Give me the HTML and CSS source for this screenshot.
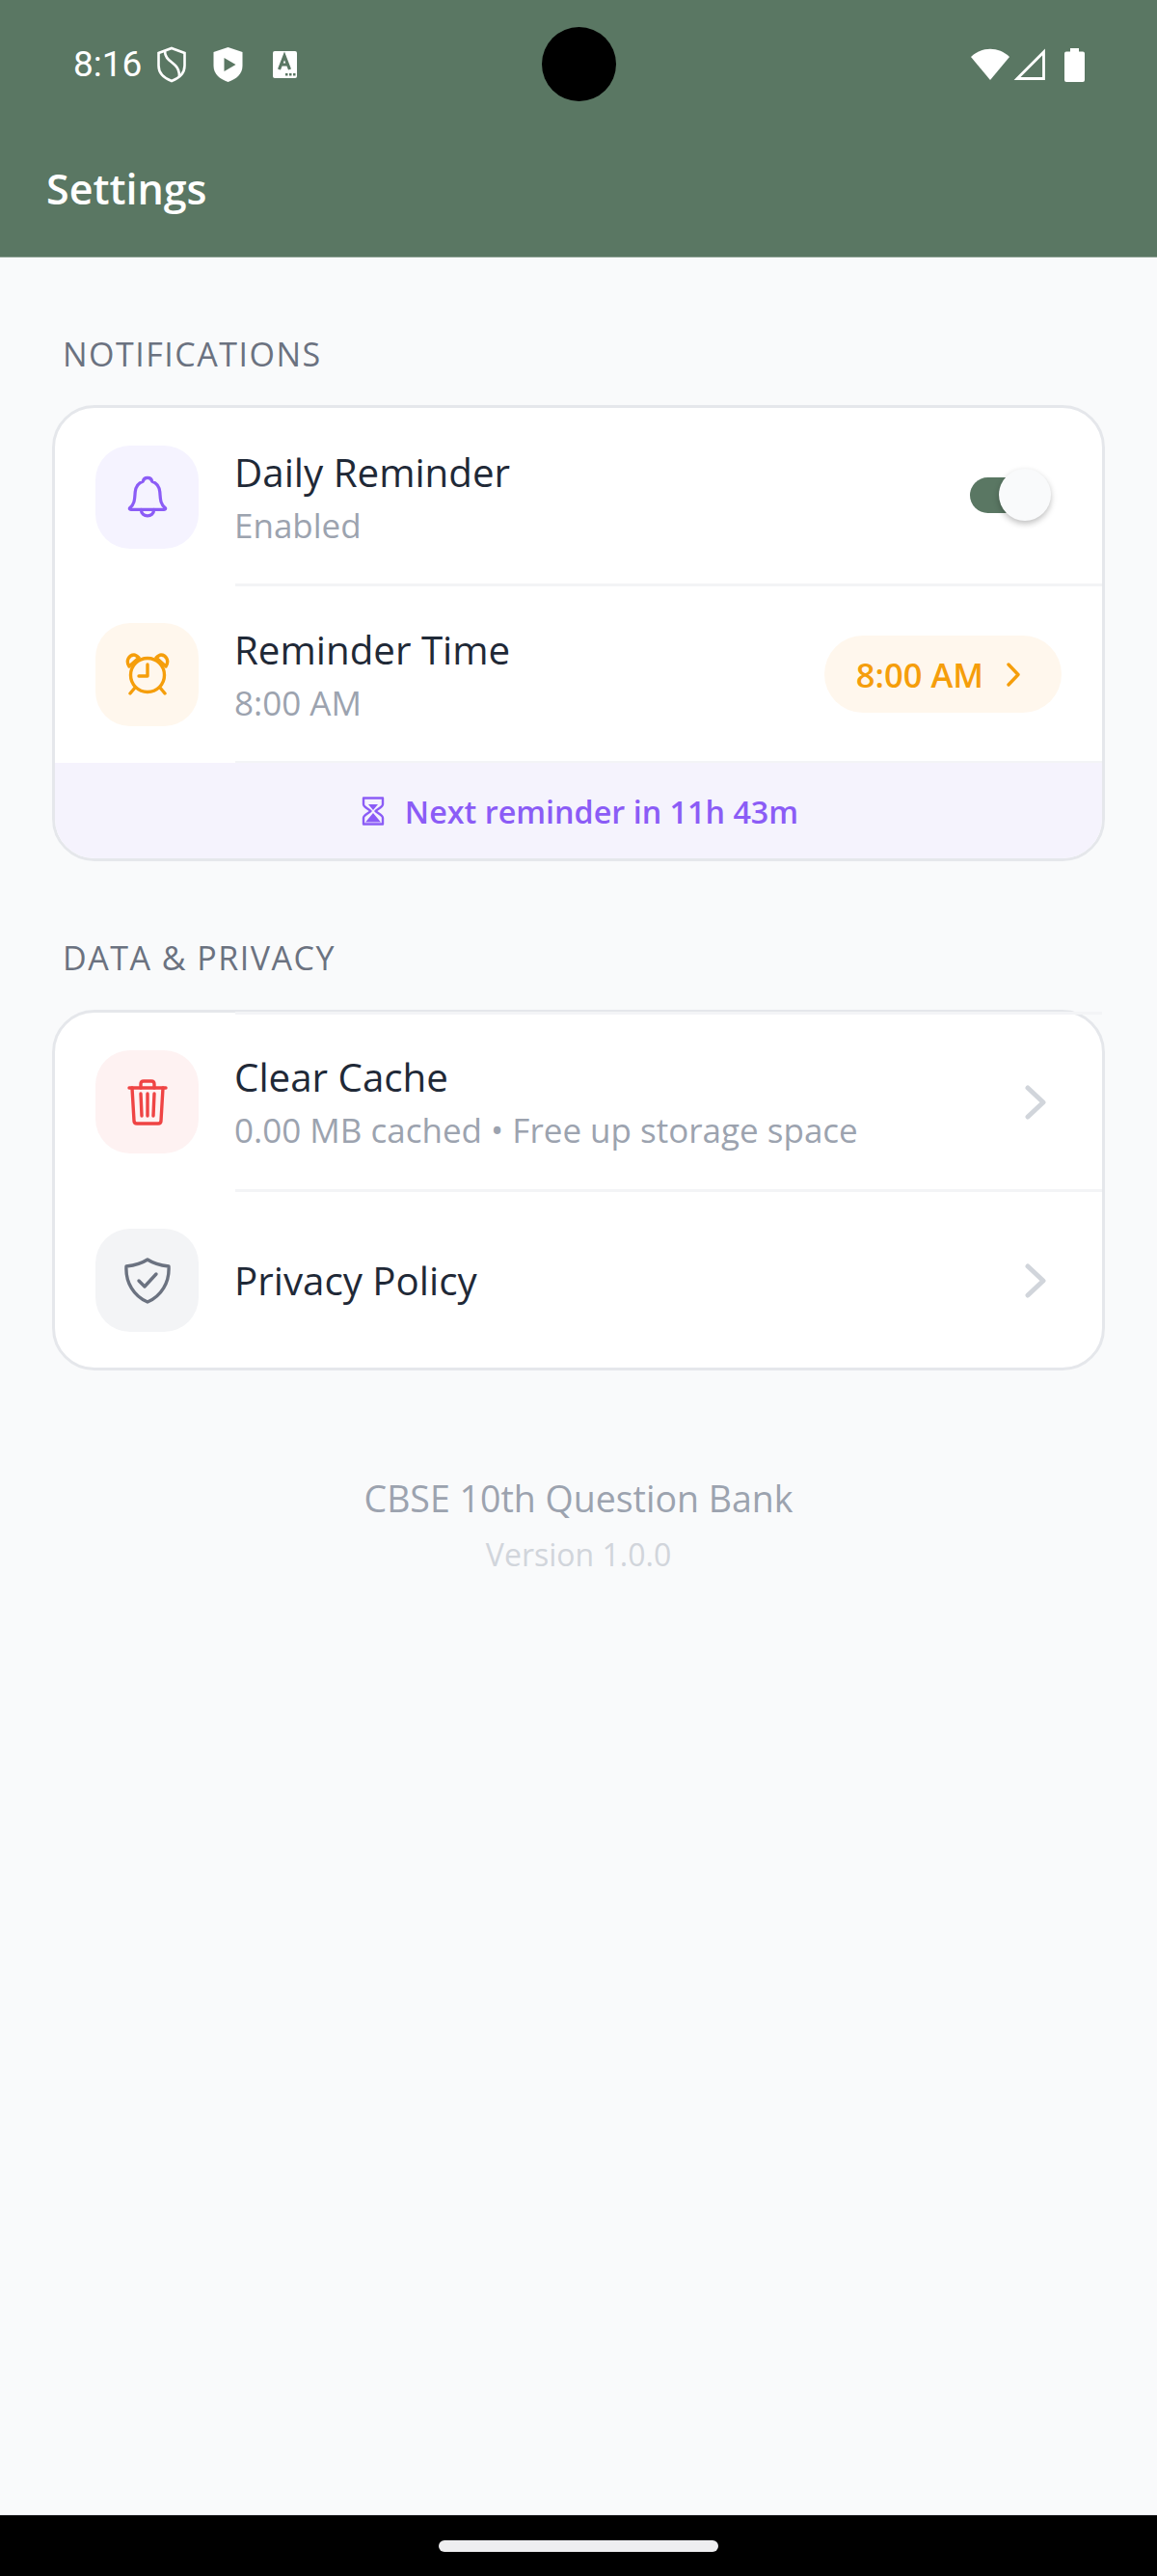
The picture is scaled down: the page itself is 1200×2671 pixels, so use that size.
FILE: index.html
```html
<!DOCTYPE html>
<html lang="en">
<head>
    <meta charset="UTF-8">
    <meta name="viewport" content="width=device-width, initial-scale=1.0">
    <title>Settings</title>
    <link rel="stylesheet" href="styles.css">
</head>
<body>
    <div class="screen">
        <header class="app-header">
            <div class="camera"></div>
            <div class="status-bar">
                <div class="status-left">
                    <span class="clock">8:16</span>
                    <svg class="status-icon" width="30" height="38" viewBox="0 0 30 38" fill="none" stroke="#fff" stroke-width="2.600">
                        <path d="M15 2 L28.500 7 V20 C28.500 28 23 33 15 36 C7 33 1.500 28 1.500 20 V7 Z"/>
                        <path d="M8 5 C8 13 14 15 19 20 C22 23 23 26 23 31"/>
                    </svg>
                    <svg class="status-icon shield-play" width="31" height="38" viewBox="0 0 31 38">
                        <path fill="#fff" d="M15.500 1 L30.500 6 V20 C30.500 29 24 34 15.500 37 C7 34 .5 29 .5 20 V6 Z"/>
                        <path fill="#5a7763" d="M11.500 12 L23.500 19 L11.500 26 Z"/>
                    </svg>
                    <svg class="status-icon glyph-a" width="25" height="28" viewBox="0 0 25 28">
                        <rect width="25" height="28" rx="2" fill="#fff"/>
                        <path fill="none" stroke="#5a7763" stroke-width="3.200" d="M6.500 19 L12 5 L17.500 19 M8.500 14 H15.500"/>
                        <path fill="#5a7763" d="M13 23h2.500v2.500H13zM17 23h2.500v2.500H17zM21 23h2.500v2.500H21z"/>
                    </svg>
                </div>
                <div class="status-right">
                    <svg width="40" height="34" viewBox="0 0 40 34"><path fill="#fff" d="M0 9 C11 -2 29 -2 40 9 L20 33 Z"/></svg>
                    <svg width="34" height="34" viewBox="0 0 34 34" fill="none" stroke="#fff" stroke-width="2.800"><path d="M4 31.500 L31.500 4 V31.500 Z"/></svg>
                    <svg class="battery" width="21" height="35" viewBox="0 0 21 35"><path fill="#fff" d="M6 0 H15 V3.500 H19 Q21 3.500 21 5.500 V33 Q21 35 19 35 H2 Q0 35 0 33 V5.500 Q0 3.500 2 3.500 H6 Z"/></svg>
                </div>
            </div>
            <h1 class="page-title">Settings</h1>
        </header>

        <main class="content">
            <h2 class="section-label">NOTIFICATIONS</h2>
            <section class="card">
                <div class="row">
                    <div class="tile tile-purple">
                        <svg width="42" height="48" viewBox="0 0 44 48" fill="none" stroke="#8b5cf6" stroke-width="3.400" stroke-linejoin="round" stroke-linecap="round">
                            <path d="M3 36 C8 32 8 27 8.500 20 C9 13 12 9 17 7.500 C18 2 26 2 27 7.500 C32 9 35 13 35.500 20 C36 27 36 32 41 36 C42 37 41.500 38 40 38 H4 C2.500 38 2 37 3 36 Z"/>
                            <path d="M15 38 C15 47 29 47 29 38"/>
                        </svg>
                    </div>
                    <div class="row-text">
                        <div class="row-title">Daily Reminder</div>
                        <div class="row-sub">Enabled</div>
                    </div>
                    <div class="toggle"><div class="toggle-thumb"></div></div>
                </div>
                <div class="row">
                    <div class="tile tile-orange">
                        <svg width="46" height="44" viewBox="0 0 46 44" fill="none" stroke="#f59e0b" stroke-width="3.400" stroke-linecap="round" stroke-linejoin="round">
                            <circle cx="23" cy="23" r="17.500"/>
                            <path d="M23 12 V24 H14"/>
                            <path d="M4 14 C0 8 4 2 9 2 C11 2 13 4 14 5 Z"/>
                            <path d="M42 14 C46 8 42 2 37 2 C35 2 33 4 32 5 Z"/>
                            <path d="M10 36 L5 42 M36 36 L41 42"/>
                        </svg>
                    </div>
                    <div class="row-text">
                        <div class="row-title">Reminder Time</div>
                        <div class="row-sub">8:00 AM</div>
                    </div>
                    <div class="time-pill">
                        <span>8:00 AM</span>
                        <svg width="14" height="25" viewBox="0 0 14 25" fill="none" stroke="#f59e0b" stroke-width="3.400" stroke-linecap="round" stroke-linejoin="round"><path d="M2 2 L12 12.500 L2 23"/></svg>
                    </div>
                </div>
                <div class="next-banner">
                    <svg width="24" height="30" viewBox="0 0 24 30">
                        <path fill="none" stroke="#8b5cf6" stroke-width="2.400" stroke-linejoin="round" d="M2 1.500 H22 V8 C22 11 16 13 14.500 15 C16 17 22 19 22 22 V28.500 H2 V22 C2 19 8 17 9.500 15 C8 13 2 11 2 8 Z"/>
                        <path fill="#8b5cf6" d="M7 8 H17 L12 14 Z M12 17 L20 26.500 H4 Z"/>
                    </svg>
                    <span>Next reminder in 11h 43m</span>
                </div>
            </section>

            <h2 class="section-label">DATA &amp; PRIVACY</h2>
            <section class="card card-plain">
                <div class="row">
                    <div class="tile tile-red">
                        <svg width="42" height="48" viewBox="0 0 42 48" fill="none" stroke="#ef4444" stroke-width="3.400" stroke-linecap="round" stroke-linejoin="round">
                            <path d="M2 9 H40"/>
                            <path d="M14 9 V5 Q14 2 17 2 H25 Q28 2 28 5 V9"/>
                            <path d="M5 9 L7 43 Q7 46 10 46 H32 Q35 46 35 43 L37 9"/>
                            <path d="M14 15 L15 38 M21 15 V38 M28 15 L27 38"/>
                        </svg>
                    </div>
                    <div class="row-text">
                        <div class="row-title">Clear Cache</div>
                        <div class="row-sub">0.00 MB cached • Free up storage space</div>
                    </div>
                    <svg class="chevron" width="22" height="36" viewBox="0 0 22 36" fill="none" stroke="#d1d5db" stroke-width="5" stroke-linecap="round" stroke-linejoin="round"><path d="M3 3 L19 18 L3 33"/></svg>
                </div>
                <div class="row">
                    <div class="tile tile-gray">
                        <svg width="48" height="48" viewBox="0 0 48 48" fill="none" stroke="#6b7280" stroke-width="3.400" stroke-linecap="round" stroke-linejoin="round">
                            <path d="M24 2 C30 6 38 8 46 9 C47 26 38 40 24 46 C10 40 1 26 2 9 C10 8 18 6 24 2 Z"/>
                            <path d="M15 24 L21 30 L33 17"/>
                        </svg>
                    </div>
                    <div class="row-text">
                        <div class="row-title">Privacy Policy</div>
                    </div>
                    <svg class="chevron" width="22" height="36" viewBox="0 0 22 36" fill="none" stroke="#d1d5db" stroke-width="5" stroke-linecap="round" stroke-linejoin="round"><path d="M3 3 L19 18 L3 33"/></svg>
                </div>
            </section>

            <footer class="about">
                <div class="about-name">CBSE 10th Question Bank</div>
                <div class="about-version">Version 1.0.0</div>
            </footer>
        </main>

        <div class="nav-bar"><div class="nav-handle"></div></div>
    </div>
</body>
</html>
```

FILE: styles.css
```css
* {
    box-sizing: border-box;
}

html, body {
    margin: 0;
    padding: 0;
}

body {
    font-family: "Open Sans", "Noto Sans", sans-serif;
    background-color: #f9fafb;
}

.screen {
    width: 1200px;
    height: 2671px;
    display: flex;
    flex-direction: column;
    overflow: hidden;
}

.app-header {
    position: relative;
    height: 267px;
    flex: none;
    background-color: #5a7763;
    border-bottom: 1px solid #8a9f91;
    color: #fff;
}

.camera {
    position: absolute;
    left: 561.500px;
    top: 28px;
    width: 77px;
    height: 77px;
    border-radius: 50%;
    background-color: #000;
}

.status-bar {
    height: 168px;
    padding: 48px 75px 0 76px;
    display: flex;
    justify-content: space-between;
    align-items: flex-start;
}

.status-left {
    display: flex;
    align-items: center;
    height: 38px;
}

.clock {
    font-family: Roboto, sans-serif;
    font-size: 37px;
    line-height: 38px;
    width: 87px;
}

.status-icon {
    flex: none;
}

.shield-play {
    margin-left: 28px;
}

.glyph-a {
    margin-left: 31px;
}

.status-right {
    display: flex;
    align-items: center;
    gap: 4px;
    height: 38px;
}

.battery {
    margin-left: 15px;
}

.page-title {
    margin: 0;
    padding-left: 48px;
    font-size: 43px;
    font-weight: 600;
    line-height: 56px;
}

.content {
    flex: 1;
    padding: 0 54px;
}

.section-label {
    margin: 0;
    padding: 78px 0 0 11px;
    font-size: 34px;
    font-weight: 400;
    line-height: 44px;
    letter-spacing: 1.500px;
    color: #6b7280;
}

.card {
    margin-top: 31px;
    background-color: #fff;
    border: 3px solid #e5e7eb;
    border-radius: 44px;
}

.card-plain {
    margin-top: 32px;
}

.row {
    position: relative;
    height: 184px;
    display: flex;
    align-items: center;
    padding: 0 42px;
    gap: 37px;
}

/* inset divider under every row but the last plain one */
.row::after {
    content: "";
    position: absolute;
    left: 187px;
    right: 0;
    bottom: -1px;
    height: 3px;
    background-color: #f3f4f6;
}

.card-plain .row {
    height: 185px;
}

.card-plain .row:last-child {
    height: 183px;
    padding-top: 2px;
}

.card-plain .row:last-child::after {
    display: none;
}

.card-plain .row:first-child::before {
    content: "";
    position: absolute;
    left: 187px;
    right: 0;
    top: -1px;
    height: 3px;
    background-color: #f3f4f6;
}

.tile {
    width: 107px;
    height: 107px;
    flex: none;
    border-radius: 36px;
    display: flex;
    align-items: center;
    justify-content: center;
}

.tile-purple {
    background-color: #f5f3ff;
}

.tile-orange {
    background-color: #fff7ed;
}

.tile-red {
    background-color: #fef2f2;
}

.tile-gray {
    background-color: #f3f4f6;
}

.row-text {
    flex: 1;
    min-width: 0;
    padding-top: 1px;
}

.row-title {
    font-size: 40.300px;
    line-height: 56px;
    color: #1f2937;
}

.row-sub {
    margin-top: 2px;
    font-size: 35px;
    line-height: 50px;
    color: #9ca3af;
}

.toggle {
    position: relative;
    width: 78px;
    height: 37px;
    margin: -3px 17px 0 0;
    border-radius: 19px;
    background-color: #5a7763;
}

.toggle-thumb {
    position: absolute;
    right: -6px;
    top: -9px;
    width: 54px;
    height: 54px;
    border-radius: 50%;
    background-color: #f9fafb;
    box-shadow: 0 3px 6px rgba(0, 0, 0, 0.25);
}

.time-pill {
    display: flex;
    align-items: center;
    gap: 24px;
    height: 80px;
    padding: 0 43px 0 33px;
    border-radius: 40px;
    background-color: #fff7ed;
    color: #f59e0b;
    font-size: 34.500px;
    font-weight: 600;
}

.chevron {
    flex: none;
    margin-right: 16px;
}

.next-banner {
    position: relative;
    height: 99px;
    display: flex;
    align-items: center;
    justify-content: center;
    gap: 21px;
    padding-left: 3px;
    background-color: #f5f3fd;
    border-radius: 0 0 41px 41px;
    color: #8b5cf6;
    font-size: 32.300px;
    font-weight: 600;
}

.about {
    padding-top: 107px;
    text-align: center;
}

.about-name {
    font-size: 37.500px;
    line-height: 52px;
    color: #9ca3af;
}

.about-version {
    margin-top: 10px;
    font-size: 32px;
    line-height: 44px;
    color: #d1d5db;
}

.nav-bar {
    height: 64px;
    flex: none;
    background-color: #000;
    border-top: 1px solid #e5e7eb;
    display: flex;
    justify-content: center;
    padding-top: 26px;
}

.nav-handle {
    width: 290px;
    height: 12px;
    border-radius: 6px;
    background-color: #eeeef0;
}
```
